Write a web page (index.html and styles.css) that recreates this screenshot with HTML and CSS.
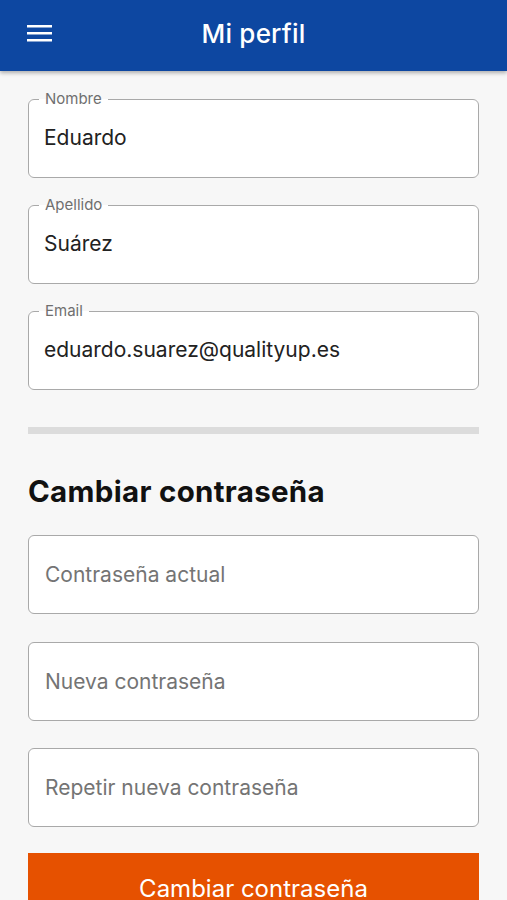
FILE: index.html
```html
<!DOCTYPE html>
<html lang="es">
<head>
<meta charset="utf-8">
<title>Mi perfil</title>
<link rel="stylesheet" href="styles.css">
</head>
<body>
<header class="topbar">
  <button class="menu" aria-label="Menú">
    <svg width="25" height="17" viewBox="0 0 25 17"><rect x="0" y="0" width="25" height="2.5" fill="#fff"/><rect x="0" y="7" width="25" height="2.5" fill="#fff"/><rect x="0" y="14" width="25" height="2.5" fill="#fff"/></svg>
  </button>
  <h1 class="title">Mi perfil</h1>
</header>
<main class="content">
  <fieldset class="field">
    <legend class="legend">Nombre</legend>
    <div class="value">Eduardo</div>
  </fieldset>
  <fieldset class="field">
    <legend class="legend">Apellido</legend>
    <div class="value">Suárez</div>
  </fieldset>
  <fieldset class="field">
    <legend class="legend">Email</legend>
    <div class="value">eduardo.suarez@qualityup.es</div>
  </fieldset>
  <div class="divider"></div>
  <h2 class="section">Cambiar contraseña</h2>
  <div class="box"><span class="placeholder">Contraseña actual</span></div>
  <div class="box"><span class="placeholder">Nueva contraseña</span></div>
  <div class="box last"><span class="placeholder">Repetir nueva contraseña</span></div>
  <button class="submit">Cambiar contraseña</button>
</main>
</body>
</html>
```
FILE: styles.css
```css
* { box-sizing: border-box; }
html, body { margin: 0; padding: 0; }
body {
  background: #f7f7f7;
  font-family: Inter, "Noto Sans", Roboto, sans-serif;
  color: #1d1d1d;
  height: 900px;
  overflow: hidden;
}
.topbar {
  height: 71px;
  background: #0d47a1;
  display: flex;
  align-items: center;
  justify-content: center;
  position: relative;
  padding-bottom: 4px;
  box-shadow: 0 2px 4px rgba(0,0,0,0.3);
}
.menu {
  position: absolute;
  left: 27px;
  top: 25px;
  background: none;
  border: 0;
  padding: 0;
  width: 25px;
  height: 17px;
  display: block;
}
.menu svg { display: block; }
.title {
  margin: 0;
  color: #fff;
  font-size: 26px;
  font-weight: 500;
  letter-spacing: 0.2px;
}
.content {
  padding: 19px 28px 0 28px;
  display: flex;
  flex-direction: column;
}
.field {
  margin: 0 0 18px 0;
  height: 88px;
  border: 1.5px solid #a9a9a9;
  border-radius: 6px;
  background: #fff;
  padding: 0 15px;
  min-width: 0;
}
.legend {
  font-size: 15px;
  color: #6f6f6f;
  padding: 0 6px;
  margin-left: -5px;
  line-height: 18px;
}
.value {
  font-size: 21px;
  line-height: 24px;
  margin-top: 18px;
  color: #222;
}
.box {
  height: 79px;
  margin-bottom: 27.5px;
  border: 1.5px solid #a9a9a9;
  border-radius: 6px;
  background: #fff;
  display: flex;
  align-items: center;
  padding-left: 16px;
}
.box.last { margin-bottom: 26px; }
.placeholder {
  font-size: 21px;
  color: #747474;
}
.divider {
  height: 7px;
  background: #dcdcdc;
  margin-top: 19px;
}
.section {
  margin: 40px 0 27px 0;
  font-size: 29.5px;
  font-weight: 700;
  color: #111;
  line-height: 34px;
  letter-spacing: 0.3px;
}
.submit {
  height: 60px;
  background: #e65100;
  border: 0;
  color: #fff;
  font-family: inherit;
  font-size: 24px;
  padding: 0;
  padding-top: 10px;
  border-radius: 0;
}
```
